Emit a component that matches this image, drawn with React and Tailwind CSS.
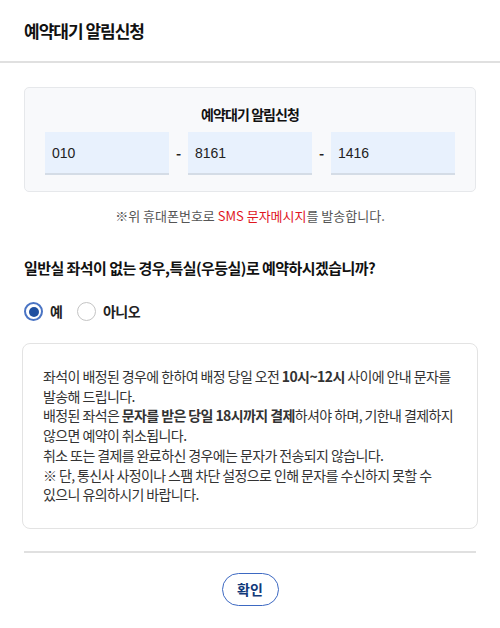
export default function App() {
  return (
    <div
      className="w-[500px] h-[628px] bg-white text-[#222]"
      style={{ fontFamily: '"Noto Sans CJK KR", "Liberation Sans", sans-serif' }}
    >
      <div className="h-[63px] flex items-center px-6 border-b-2 border-[#e0e0e0]">
        <h1 className="text-[17px] font-bold tracking-[-1px] text-[#111]">예약대기 알림신청</h1>
      </div>

      <div className="px-6 pt-[24px]">
        <div className="h-[105px] bg-[#f8f9fb] border border-[#e6e8eb] rounded-[5px] pt-4 px-5">
          <p className="text-center text-[14px] font-bold tracking-[-0.9px] text-[#111] leading-5">예약대기 알림신청</p>
          <div className="mt-[8px] flex items-center">
            <input
              readOnly
              value="010"
              className="w-[124px] h-[43px] bg-[#e8f1fd] border-b-2 border-[#d4dce6] px-[7px] text-[14px] text-[#222] outline-none"
              style={{ fontFamily: '"Liberation Sans", sans-serif' }}
            />
            <span className="w-[19px] text-center text-[14px] font-bold">-</span>
            <input
              readOnly
              value="8161"
              className="w-[124px] h-[43px] bg-[#e8f1fd] border-b-2 border-[#d4dce6] px-[7px] text-[14px] text-[#222] outline-none"
              style={{ fontFamily: '"Liberation Sans", sans-serif' }}
            />
            <span className="w-[19px] text-center text-[14px] font-bold">-</span>
            <input
              readOnly
              value="1416"
              className="w-[124px] h-[43px] bg-[#e8f1fd] border-b-2 border-[#d4dce6] px-[7px] text-[14px] text-[#222] outline-none"
              style={{ fontFamily: '"Liberation Sans", sans-serif' }}
            />
          </div>
        </div>

        <p className="mt-[14px] text-center text-[13px] text-[#555] leading-5">
          ※위 휴대폰번호로 <span className="text-[#e0161e]">SMS 문자메시지</span>를 발송합니다.
        </p>

        <p className="mt-[30px] text-[15px] font-bold tracking-[-0.55px] text-[#111] leading-6">
          일반실 좌석이 없는 경우,특실(우등실)로 예약하시겠습니까?
        </p>

        <div className="mt-[21px] flex items-center">
          <label className="flex items-center">
            <span className="w-[19px] h-[19px] rounded-full border-2 border-[#4a74c4] flex items-center justify-center">
              <span className="w-[10px] h-[10px] rounded-full bg-[#1f4fa0]" />
            </span>
            <span className="ml-[7px] text-[14px] font-bold">예</span>
          </label>
          <label className="flex items-center ml-[14px]">
            <span className="w-[19px] h-[19px] rounded-full border border-[#c4c4c4]" />
            <span className="ml-[7px] text-[14px] font-bold tracking-[-0.5px]">아니오</span>
          </label>
        </div>
      </div>

      <div className="mx-[22px] mt-[21px] h-[186px] border border-[#e3e3e3] rounded-[8px] px-5 pt-[23px] text-[14px] leading-[19.7px] tracking-[-0.6px] text-[#333] whitespace-nowrap">
        좌석이 배정된 경우에 한하여 배정 당일 오전 <b>10시~12시</b> 사이에 안내 문자를
        <br />
        발송해 드립니다.
        <br />
        배정된 좌석은 <b>문자를 받은 당일 18시까지 결제</b>하셔야 하며, 기한내 결제하지
        <br />
        않으면 예약이 취소됩니다.
        <br />
        취소 또는 결제를 완료하신 경우에는 문자가 전송되지 않습니다.
        <br />
        ※ 단, 통신사 사정이나 스팸 차단 설정으로 인해 문자를 수신하지 못할 수
        <br />
        있으니 유의하시기 바랍니다.
      </div>

      <div className="mx-6 mt-[22px] border-t-2 border-[#e0e0e0]" />

      <div className="flex justify-center mt-[20px]">
        <button className="w-[57px] h-[33px] rounded-full border border-[#3d69c2] text-[14px] font-bold text-[#123a7a] bg-white">
          확인
        </button>
      </div>
    </div>
  );
}
